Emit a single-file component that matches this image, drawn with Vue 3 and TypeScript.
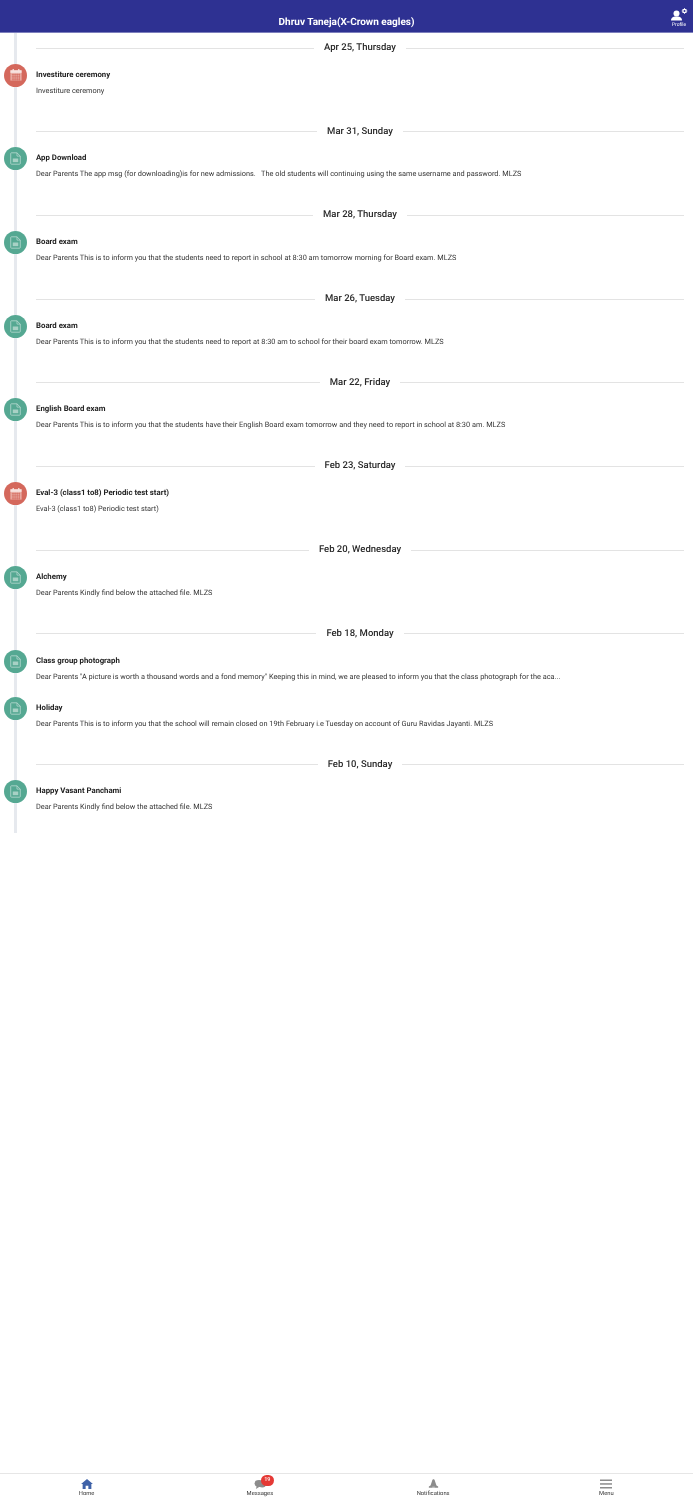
<script setup lang="ts">
interface Item { kind: 'doc' | 'cal'; title: string; body: string }
interface Group { date: string; items: Item[] }
const groups: Group[] = [
  { date: 'Apr 25, Thursday', items: [{ kind: 'cal', title: 'Investiture ceremony', body: 'Investiture ceremony' }] },
  { date: 'Mar 31, Sunday', items: [{ kind: 'doc', title: 'App Download', body: 'Dear Parents The app msg (for downloading)is for new admissions.   The old students will continuing using the same username and password. MLZS' }] },
  { date: 'Mar 28, Thursday', items: [{ kind: 'doc', title: 'Board exam', body: 'Dear Parents This is to inform you that the students need to report in school at 8:30 am tomorrow morning for Board exam. MLZS' }] },
  { date: 'Mar 26, Tuesday', items: [{ kind: 'doc', title: 'Board exam', body: 'Dear Parents This is to inform you that the students need to report at 8:30 am to school for their board exam tomorrow. MLZS' }] },
  { date: 'Mar 22, Friday', items: [{ kind: 'doc', title: 'English Board exam', body: 'Dear Parents This is to inform you that the students have their English Board exam tomorrow and they need to report in school at 8:30 am. MLZS' }] },
  { date: 'Feb 23, Saturday', items: [{ kind: 'cal', title: 'Eval-3 (class1 to8) Periodic test start)', body: 'Eval-3 (class1 to8) Periodic test start)' }] },
  { date: 'Feb 20, Wednesday', items: [{ kind: 'doc', title: 'Alchemy', body: 'Dear Parents Kindly find below the attached file. MLZS' }] },
  { date: 'Feb 18, Monday', items: [
    { kind: 'doc', title: 'Class group photograph', body: 'Dear Parents "A picture is worth a thousand words and a fond memory" Keeping this in mind, we are pleased to inform you that the class photograph for the aca...' },
    { kind: 'doc', title: 'Holiday', body: 'Dear Parents This is to inform you that the school will remain closed on 19th February i.e Tuesday on account of Guru Ravidas Jayanti. MLZS' },
  ] },
  { date: 'Feb 10, Sunday', items: [{ kind: 'doc', title: 'Happy Vasant Panchami', body: 'Dear Parents Kindly find below the attached file. MLZS' }] },
]
</script>

<template>
  <div class="page">
    <header class="header">
      <h1 class="student">Dhruv Taneja(X-Crown eagles)</h1>
      <div class="profile">
        <svg width="18" height="13" viewBox="0 0 18 13" fill="#fff">
          <circle cx="6.500" cy="5.500" r="3" />
          <path d="M1 12.500c0-2.200 1-3.200 3.800-3.900h3.400c2.800.7 3.800 1.700 3.800 3.900z" />
          <circle cx="14.500" cy="3" r="1.600" fill="none" stroke="#fff" stroke-width="1.200" />
          <path d="M14.500 .2v1.200M14.500 4.600v1.200M11.700 3h1.200M16.100 3h1.200M12.600 1.100l.8.8M15.600 4.100l.8.8M12.600 4.900l.8-.8M15.600 1.900l.8-.8" stroke="#fff" stroke-width=".9" />
        </svg>
        <span>Profile</span>
      </div>
    </header>

    <main class="timeline">
      <div class="rail"></div>
      <section v-for="g in groups" :key="g.date" class="group">
        <div class="date"><span>{{ g.date }}</span></div>
        <article v-for="it in g.items" :key="it.title" class="item">
          <div class="badge" :class="it.kind">
            <svg v-if="it.kind === 'doc'" width="11" height="13" viewBox="0 0 12 14" fill="none">
              <path d="M.8 1.500a.7.7 0 0 1 .7-.7H7.600L11.200 4.400v8.100a.7.7 0 0 1-.7.7h-9a.7.7 0 0 1-.7-.7z" stroke="#c4e0d8" stroke-width=".8" />
              <path d="M7.600.8v3.600h3.600" stroke="#c4e0d8" stroke-width=".7" />
              <rect x="3" y="7" width="6" height="4" fill="#a8d1c5" />
            </svg>
            <svg v-else width="12" height="12" viewBox="0 0 14 14">
              <rect x="0.500" y="1.500" width="13" height="12" fill="#eab0a8" />
              <rect x="0.500" y="1.500" width="13" height="3" fill="#f7e3e0" />
              <rect x="3" y="0" width="1.500" height="2.500" fill="#f7e3e0" />
              <rect x="9.500" y="0" width="1.500" height="2.500" fill="#f7e3e0" />
              <path d="M2 6.500h10M2 8.500h10M2 10.500h10M2 12.500h10M3.500 5.500v8M6 5.500v8M8.500 5.500v8M11 5.500v8" stroke="#d4685c" stroke-width=".7" />
            </svg>
          </div>
          <h2 class="title">{{ it.title }}</h2>
          <p class="body">{{ it.body }}</p>
        </article>
      </section>
    </main>

    <nav class="tabs">
      <div class="tab">
        <svg width="12" height="10" viewBox="0 0 13 11" fill="#3f62a8"><path d="M6.500 0 13 5.500h-1.700V11H8V7.500H5V11H1.700V5.500H0z" /></svg>
        <span>Home</span>
      </div>
      <div class="tab">
        <div class="msg">
          <svg width="12" height="10" viewBox="0 0 13 11" fill="#8c8c8c"><ellipse cx="5.500" cy="5" rx="5" ry="3.800" /><ellipse cx="9" cy="6" rx="4" ry="3.300" /><path d="M3 7.500 2 11l4-2.500z" /></svg>
          <b class="count">19</b>
        </div>
        <span>Messages</span>
      </div>
      <div class="tab">
        <svg width="11" height="10" viewBox="0 0 13 11" fill="#8c8c8c"><path d="M6.500 0c.9 0 1.400.8 1.800 2.200l1.700 5 2 1.200v1.400H1V8.400l2-1.200 1.700-5C5.100.8 5.600 0 6.500 0z" /><path d="M5 8.700h3v1H5z" fill="#d8d8d8" /></svg>
        <span>Notifications</span>
      </div>
      <div class="tab">
        <svg width="12" height="10" viewBox="0 0 12 10" fill="#8c8c8c"><rect width="12" height="1.500" y="0.500" /><rect width="12" height="1.500" y="4.200" /><rect width="12" height="1.500" y="8" /></svg>
        <span>Menu</span>
      </div>
    </nav>
  </div>
</template>

<style>
html, body { margin: 0; background: #fff; }
</style>

<style scoped>
.page {
  position: relative;
  width: 693px;
  height: 1500px;
  overflow: hidden;
  background: #fff;
  font-family: Roboto, "Liberation Sans", sans-serif;
  color: #212121;
  text-rendering: geometricPrecision;
  filter: blur(0.3px);
}
.header {
  position: relative;
  height: 32px;
  background: #2e3192;
  border-bottom: 1px solid #7d7fbd;
  display: flex;
  align-items: center;
  justify-content: center;
}
.student {
  margin: 14px 0 0;
  font-size: 10px;
  line-height: 12px;
  font-weight: 700;
  color: #fff;
}
.profile {
  position: absolute;
  right: 5px;
  top: 8px;
  display: flex;
  flex-direction: column;
  align-items: center;
  color: #fff;
  font-size: 5px;
  line-height: 6px;
}
.profile svg { display: block; margin-bottom: 1px; }
.timeline {
  position: relative;
  padding: 8px 9px 0 36px;
  height: 792px;
}
.rail {
  position: absolute;
  left: 14px;
  top: 0;
  bottom: 0;
  width: 2.500px;
  background: #e6e9ee;
}
.date {
  height: 14px;
  margin-bottom: 12.700px;
  display: flex;
  align-items: center;
  gap: 10px;
  font-size: 9.500px;
  line-height: 14px;
  font-weight: 500;
  color: #2a2a2a;
}
.date::before,
.date::after {
  content: "";
  flex: 1;
  height: 1px;
  background: #e3e3e3;
}
.group { margin-bottom: 10px; }
.item {
  position: relative;
  height: 47px;
}
.badge {
  position: absolute;
  left: -32px;
  top: -4px;
  width: 23px;
  height: 23px;
  border-radius: 50%;
  display: flex;
  align-items: center;
  justify-content: center;
}
.badge.doc { background: #55a892; }
.badge.cal { background: #d4685c; }
.title {
  margin: 0;
  padding-top: 1px;
  font-size: 7.800px;
  line-height: 12px;
  font-weight: 700;
  color: #222;
}
.body {
  margin: 4px 0 0;
  font-size: 7.350px;
  line-height: 12px;
  color: #333;
  white-space: pre-wrap;
}
.tabs {
  position: absolute;
  left: 0;
  right: 0;
  bottom: 0;
  height: 26px;
  border-top: 1px solid #e6e6e6;
  display: grid;
  grid-template-columns: repeat(4, 173.250px);
  background: #fff;
}
.tab {
  display: flex;
  flex-direction: column;
  align-items: center;
  padding-top: 5px;
  font-size: 5.800px;
  line-height: 7px;
  color: #333;
}
.tab svg { display: block; margin-bottom: 2px; }
.msg { position: relative; height: 12px; }
.count {
  position: absolute;
  left: 7px;
  top: -4px;
  width: 13px;
  height: 11px;
  border-radius: 6px;
  background: #e53935;
  color: #fff;
  font-size: 5.500px;
  line-height: 11px;
  text-align: center;
  font-weight: 500;
}
</style>
